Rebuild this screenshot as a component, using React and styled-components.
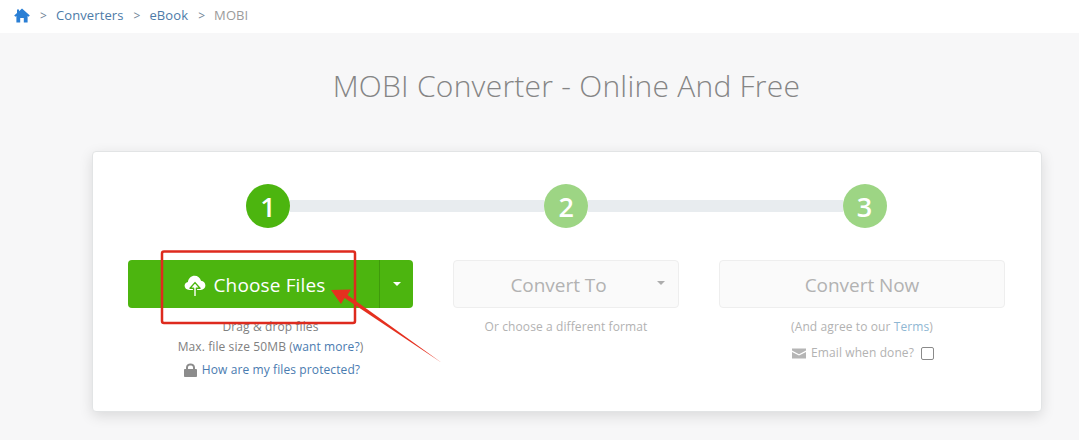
import React from 'react';
import styled, { createGlobalStyle } from 'styled-components';

const GlobalStyle = createGlobalStyle`
  html, body {
    margin: 0;
    padding: 0;
    background: #f7f7f8;
    font-family: "Open Sans", "Noto Sans", "Liberation Sans", sans-serif;
    overflow: hidden;
  }
`;

const Page = styled.div`
  position: relative;
  width: 1079px;
  height: 440px;
  overflow: hidden;
`;

const Crumbs = styled.nav`
  display: flex;
  align-items: center;
  height: 33px;
  padding: 0 0 3px 14px;
  box-sizing: border-box;
  background: #fff;
  font-size: 13px;
  letter-spacing: 0.1px;
`;

const CrumbLink = styled.a`
  color: ${p => (p.$current ? '#9b9b9b' : '#4d7ba8')};
`;

const Sep = styled.span`
  color: #6f8396;
  margin: 0 9px 0 10px;
  font-size: 12px;
`;

const Title = styled.h1`
  margin: 0;
  padding-top: 33px;
  height: 118px;
  box-sizing: border-box;
  width: 1133px;
  text-align: center;
  font-size: 30px;
  line-height: 40px;
  font-weight: 300;
  letter-spacing: 0.25px;
  color: #858585;
`;

const Card = styled.section`
  margin-left: 92px;
  width: 950px;
  height: 261px;
  box-sizing: border-box;
  padding: 32px 35px 0;
  background: #fff;
  border: 1px solid #e2e4e5;
  border-radius: 4px;
  box-shadow: 0 4px 14px rgba(0, 0, 0, 0.12);
`;

const Steps = styled.div`
  display: flex;
  align-items: center;
  padding: 0 119.5px 0 118px;
`;

const StepCircle = styled.div`
  flex: none;
  width: 44px;
  height: 44px;
  border-radius: 50%;
  display: flex;
  align-items: center;
  justify-content: center;
  color: #fff;
  font-size: 27px;
  font-weight: 600;
  background: ${p => (p.$active ? '#4cb50f' : '#9dd584')};
`;

const Track = styled.div`
  flex: 1;
  height: 12px;
  background: #e8ecef;
`;

const Columns = styled.div`
  display: grid;
  grid-template-columns: 285px 226px 286px;
  column-gap: 40px;
  margin-top: 32px;
`;

const Col = styled.div`
  display: flex;
  flex-direction: column;
  align-items: center;
`;

const SplitButton = styled.div`
  display: flex;
  width: 100%;
  height: 48px;
  color: #fff;
  background: #4cb50f;
  border-radius: 4px;
`;

const MainPart = styled.div`
  flex: 1;
  display: flex;
  align-items: center;
  justify-content: center;
  gap: 7px;
  font-size: 19px;
  letter-spacing: 0.15px;
  padding: 1px 0 0 3px;

  svg {
    margin-top: 3px;
  }
`;

const CaretPart = styled.div`
  width: 33px;
  display: flex;
  align-items: center;
  justify-content: center;
  border-left: 1px solid #3f9a0b;
`;

const Caret = styled.span`
  width: 0;
  height: 0;
  border-left: 4px solid transparent;
  border-right: 4px solid transparent;
  border-top: 4px solid ${p => p.$color || '#fff'};
`;

const GhostButton = styled.div`
  position: relative;
  width: 100%;
  height: 48px;
  box-sizing: border-box;
  display: flex;
  align-items: center;
  justify-content: center;
  font-size: 19px;
  letter-spacing: -0.05px;
  color: #b2b2b2;
  background: #fafafa;
  border: 1px solid #eeeeee;
  border-radius: 4px;
  padding: 1px ${p => p.$caretRoom || 0}px 0 0;
`;

const CaretSlot = styled.span`
  position: absolute;
  right: 13px;
  top: 20px;
  display: flex;
`;

const Note = styled.div`
  font-size: 12px;
  line-height: 20px;
  letter-spacing: 0.1px;
  white-space: nowrap;
  color: ${p => (p.$faded ? '#b2b2b2' : '#808080')};
  margin-top: ${p => p.$top || 0}px;
  padding-left: ${p => p.$nudge || 0}px;
  display: flex;
  align-items: center;
  gap: 5px;
`;

const TextLink = styled.a`
  color: ${p => (p.$faded ? '#8fb7d3' : '#4a7bb0')};
`;

const FakeCheck = styled.span`
  width: 11px;
  height: 11px;
  margin-left: 2px;
  border: 1px solid #8a8a8a;
  border-radius: 2px;
  background: #fff;
`;

// red box + arrow somebody drew on top of the screenshot
const Markup = styled.svg`
  position: absolute;
  left: 0;
  top: 0;
  pointer-events: none;
`;

const HomeIcon = () => (
  <svg width="16" height="15" viewBox="0 0 16 15">
    <path fill="#2a7fd5" d="M8 0.5 L15.8 7.6 L14.6 8.8 L13.6 7.9 V14.5 H9.8 V10 H6.2 V14.5 H2.4 V7.9 L1.4 8.8 L0.2 7.6 L3 5 V1.5 H5 V3.2 Z" />
  </svg>
);

const CloudIcon = () => (
  <svg width="22" height="22" viewBox="0 0 22 22">
    <path fill="#fff" d="M5.5 15 C2.4 15 0.6 13 0.6 10.8 C0.6 8.8 2 7.4 3.9 7 C4.3 3.4 7.2 0.8 10.6 0.8 C13.8 0.8 16.2 2.9 17 5.8 C19.6 6 21.4 8.2 21.4 10.6 C21.4 13 19.5 15 16.6 15 Z" />
    <path fill="#fff" stroke="#4cb50f" strokeWidth="1.4" strokeLinejoin="round" d="M11 7.6 L16 13.2 H12.4 V21.8 H9.6 V13.2 H6 Z" />
    <path fill="#4cb50f" d="M9 15.4 H9.6 V21.8 H9 Z M12.4 15.4 H13 V21.8 H12.4 Z" />
  </svg>
);

const LockIcon = () => (
  <svg width="13" height="14" viewBox="0 0 13 14">
    <path fill="#8c8c8c" d="M2 6 V4.4 C2 2 4 0.6 6.5 0.6 C9 0.6 11 2 11 4.4 V6 H12.2 C12.6 6 13 6.4 13 6.8 V13.2 C13 13.6 12.6 14 12.2 14 H0.8 C0.4 14 0 13.6 0 13.2 V6.8 C0 6.4 0.4 6 0.8 6 Z M4 6 H9 V4.4 C9 3.2 7.8 2.6 6.5 2.6 C5.2 2.6 4 3.2 4 4.4 Z" />
  </svg>
);

const MailIcon = () => (
  <svg width="14" height="11" viewBox="0 0 14 11">
    <path fill="#b5b5b5" d="M0 0.5 H14 V2.6 L7 6.2 L0 2.6 Z M0 4 L7 7.6 L14 4 V10.5 H0 Z" />
  </svg>
);

export default function App() {
  return (
    <Page>
      <GlobalStyle />
      <Crumbs>
        <HomeIcon />
        <Sep>&gt;</Sep>
        <CrumbLink>Converters</CrumbLink>
        <Sep>&gt;</Sep>
        <CrumbLink>eBook</CrumbLink>
        <Sep>&gt;</Sep>
        <CrumbLink $current>MOBI</CrumbLink>
      </Crumbs>
      <Title>MOBI Converter - Online And Free</Title>
      <Card>
        <Steps>
          <StepCircle $active>1</StepCircle>
          <Track />
          <StepCircle>2</StepCircle>
          <Track />
          <StepCircle>3</StepCircle>
        </Steps>
        <Columns>
          <Col>
            <SplitButton>
              <MainPart><CloudIcon />Choose Files</MainPart>
              <CaretPart><Caret /></CaretPart>
            </SplitButton>
            <Note $top={9}>Drag &amp; drop files</Note>
            <Note>
              <span>Max. file size 50MB (<TextLink>want more?</TextLink>)</span>
            </Note>
            <Note $top={3} $nudge={3}><LockIcon /><TextLink>How are my files protected?</TextLink></Note>
          </Col>
          <Col>
            <GhostButton $caretRoom={15}>
              Convert To
              <CaretSlot><Caret $color="#adadad" /></CaretSlot>
            </GhostButton>
            <Note $faded $top={9}>Or choose a different format</Note>
          </Col>
          <Col>
            <GhostButton>Convert Now</GhostButton>
            <Note $faded $top={9}><span>(And agree to our <TextLink $faded>Terms</TextLink>)</span></Note>
            <Note $faded $top={6} $nudge={2}><MailIcon />Email when done?<FakeCheck /></Note>
          </Col>
        </Columns>
      </Card>
      <Markup width="1079" height="440" viewBox="0 0 1079 440">
        <rect x="162" y="251.5" width="193" height="71.5" rx="2" fill="none" stroke="#de2a1e" strokeWidth="2.5" />
        <path fill="#e5301f" d="M331 290 L351 289.5 L347.5 295 L442 363 L344.5 298 L341 304 Z" />
      </Markup>
    </Page>
  );
}
